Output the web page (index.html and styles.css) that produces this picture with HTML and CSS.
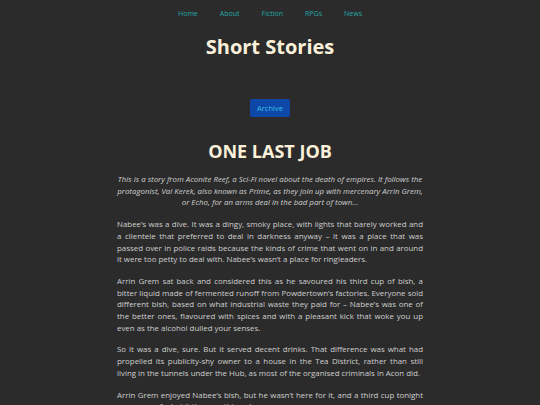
FILE: index.html
```html
<!DOCTYPE html>
<html>
<head>
<meta charset="utf-8">
<link rel="stylesheet" href="styles.css">
</head>
<body>
<nav class="nav">
  <a href="#">Home</a>
  <a href="#">About</a>
  <a href="#">Fiction</a>
  <a href="#">RPGs</a>
  <a href="#">News</a>
</nav>
<h1 class="site-title">Short Stories</h1>
<div class="archive-row"><a class="archive" href="#">Archive</a></div>
<main class="story">
  <h2 class="story-title">ONE LAST JOB</h2>
  <p class="intro">This is a story from Aconite Reef, a Sci-Fi novel about the death of empires. It follows the protagonist, Val Kerek, also known as Prime, as they join up with mercenary Arrin Grem, or Echo, for an arms deal in the bad part of town…</p>
  <p>Nabee’s was a dive. It was a dingy, smoky place, with lights that barely worked and a clientele that preferred to deal in darkness anyway – it was a place that was passed over in police raids because the kinds of crime that went on in and around it were too petty to deal with. Nabee’s wasn’t a place for ringleaders.</p>
  <p>Arrin Grem sat back and considered this as he savoured his third cup of bish, a bitter liquid made of fermented runoff from Powdertown’s factories. Everyone sold different bish, based on what industrial waste they paid for – Nabee’s was one of the better ones, flavoured with spices and with a pleasant kick that woke you up even as the alcohol dulled your senses.</p>
  <p>So it was a dive, sure. But it served decent drinks. That difference was what had propelled its publicity-shy owner to a house in the Tea District, rather than still living in the tunnels under the Hub, as most of the organised criminals in Acon did.</p>
  <p>Arrin Grem enjoyed Nabee’s bish, but he wasn’t here for it, and a third cup tonight was more of a habit than anything else.</p>
</main>
</body>
</html>
```
FILE: styles.css
```css
html, body {
  margin: 0;
  padding: 0;
  background: #2b2b2b;
}
body {
  font-family: "Open Sans", "Noto Sans", sans-serif;
  color: #cfcfcf;
  overflow: hidden;
  height: 405px;
}
.nav {
  display: flex;
  justify-content: center;
  gap: 22px;
  padding-top: 9px;
  font-size: 7px;
  line-height: 10px;
}
.nav a {
  color: #22a8a8;
  text-decoration: none;
}
.site-title {
  margin: 16px 0 0;
  text-align: center;
  color: #fbf1da;
  font-size: 20px;
  line-height: 24px;
  font-weight: 700;
}
.archive-row {
  display: flex;
  justify-content: center;
  margin-top: 40px;
}
.archive {
  display: block;
  width: 40px;
  height: 18px;
  line-height: 18px;
  text-align: center;
  background: #0d47a8;
  color: #38c0e8;
  font-size: 7.5px;
  border-radius: 2px;
  text-decoration: none;
}
.story {
  width: 306px;
  margin: 0 auto;
}
.story-title {
  margin: 23px 0 0;
  text-align: center;
  color: #fbf1da;
  font-size: 18px;
  line-height: 22px;
  font-weight: 700;
}
.story p {
  margin: 10px 0 0;
  font-size: 7.9px;
  line-height: 11.7px;
  text-align: justify;
}
.story p.intro {
  margin-top: 12px;
  font-style: italic;
  text-align: center;
  color: #cfcfcf;
}
```
